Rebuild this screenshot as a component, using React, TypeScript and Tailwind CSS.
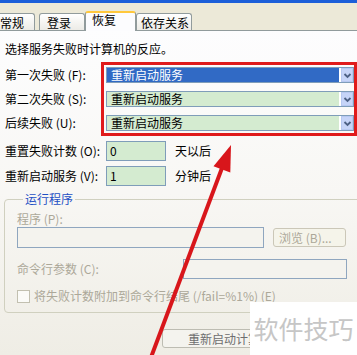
import React from 'react'

const font = "font-['Noto_Sans_CJK_SC','Noto_Sans',sans-serif]"

function Tab({ label, active, className }: { label: string; active?: boolean; className: string }) {
  if (active) {
    return (
      <div
        className={`relative z-10 -mb-px h-[20px] rounded-t-[3px] border border-b-0 border-[#919B9C] border-t-2 border-t-[#FFC83C] bg-[#FCFCFE] text-[12px] leading-[14px] ${className}`}
      >
        {label}
      </div>
    )
  }
  return (
    <div
      className={`h-[17px] rounded-t-[3px] border border-b-0 border-[#919B9C] bg-gradient-to-b from-white to-[#ECEBE6] pt-[2px] text-[12px] leading-[14px] ${className}`}
    >
      {label}
    </div>
  )
}

function Select({ selected }: { selected?: boolean }) {
  return (
    <div className="flex h-[16px] items-stretch border border-[#7F9DB9] bg-white">
      <div
        className={`flex flex-1 items-center pl-[4px] text-[12px] leading-[14px] ${
          selected ? 'bg-[#316AC5] text-white' : 'bg-[#D4EBD0] text-black'
        }`}
      >
        重新启动服务
      </div>
      <div className="ml-[2px] flex w-[12px] items-center justify-center border border-[#B7C8F1] bg-[#C6D4F8]">
        <svg width="9" height="7" viewBox="0 0 9 7">
          <path d="M1.5 2 L4.5 5 L7.5 2" fill="none" stroke="#4D6185" strokeWidth="1.8" />
        </svg>
      </div>
    </div>
  )
}

function Label({ children }: { children: React.ReactNode }) {
  return <div className="flex h-[16px] items-center text-[12px] leading-[14px] text-black">{children}</div>
}

export default function App() {
  return (
    <div className={`relative h-[355px] w-[357px] overflow-hidden bg-[#ECE9D8] ${font}`}>
      {/* window title strip */}
      <div className="h-[3px] bg-[#1C5FD9]" />

      {/* tabs */}
      <div className="flex h-[27px] items-end bg-[#ECE9D8]">
        <Tab label="常规" className="-ml-[9px] w-[44px] pl-[8px]" />
        <Tab label="登录" className="ml-[4px] w-[46px] pl-[7px]" />
        <Tab label="恢复" active className="w-[51px] pl-[6px]" />
        <Tab label="依存关系" className="w-[56px] pl-[4px]" />
      </div>

      {/* panel */}
      <div className="h-[325px] border-t border-[#919B9C] bg-gradient-to-b from-[#FDFDFE] via-[#F8F7F4] to-[#EFEDE5]">
        <div className="mt-[11px] pl-[5px] text-[12px] leading-[14px]">选择服务失败时计算机的反应。</div>

        <div className="mt-[6px] flex">
          <div className="flex w-[101px] flex-col gap-[8px] pl-[5px] pt-[5px]">
            <Label>第一次失败 (F):</Label>
            <Label>第二次失败 (S):</Label>
            <Label>后续失败 (U):</Label>
          </div>
          <div className="flex w-[256px] flex-col gap-[8px] border-[3px] border-[#E01B1B] pb-[2px] pl-[2px] pr-0 pt-[2px]">
            <Select selected />
            <Select />
            <Select />
          </div>
        </div>

        <div className="mt-[5px] flex flex-col gap-[5px]">
          <div className="flex items-center">
            <div className="w-[106px] pl-[5px] text-[12px] leading-[14px]">重置失败计数 (O):</div>
            <div className="flex h-[20px] w-[60px] items-center border border-[#7F9DB9] bg-[#D4EBD0] pl-[3px] text-[12px]">0</div>
            <div className="ml-[9px] text-[12px] leading-[14px]">天以后</div>
          </div>
          <div className="flex items-center">
            <div className="w-[106px] pl-[5px] text-[12px] leading-[14px]">重新启动服务 (V):</div>
            <div className="flex h-[20px] w-[60px] items-center border border-[#7F9DB9] bg-[#D4EBD0] pl-[3px] text-[12px]">1</div>
            <div className="ml-[9px] text-[12px] leading-[14px]">分钟后</div>
          </div>
        </div>

        <fieldset className="ml-[4px] mt-[6px] w-[362px] rounded-[4px] border border-[#D0D0BF] pb-[9px] pl-[12px]">
          <legend className="ml-[6px] px-[2px] text-[12px] leading-[14px] text-[#1E4FC4]">运行程序</legend>
          <div className="mt-[6px] text-[12px] leading-[14px] text-[#ACA899]">程序 (P):</div>
          <div className="mt-[1px] flex items-center">
            <div className="h-[21px] w-[247px] border border-[#8FA6BF] bg-[#F4F3EE]" />
            <div className="ml-[9px] flex h-[19px] w-[73px] items-center rounded-[3px] border border-[#CBC7B8] bg-[#F5F4EA] pl-[5px] text-[12px] leading-[14px] text-[#ACA899]">
              浏览 (B)...
            </div>
          </div>
          <div className="mt-[11px] flex h-[20px] items-center">
            <div className="w-[166px] text-[12px] leading-[14px] text-[#ACA899]">命令行参数 (C):</div>
            <div className="h-[20px] w-[164px] border border-[#8FA6BF] bg-[#F4F3EE]" />
          </div>
          <div className="mt-[10px] flex items-center">
            <div className="h-[13px] w-[13px] border border-[#C2C0B0] bg-[#FBFBF8]" />
            <div className="ml-[4px] text-[12px] leading-[14px] text-[#ACA899]">将失败计数附加到命令行结尾 (/fail=%1%) (E)</div>
          </div>
        </fieldset>

        {/* bottom button, its right part hidden behind the watermark */}
        <div className="ml-[162px] mt-[16px] h-[19px] w-[88px] overflow-hidden">
          <div className="flex h-[19px] w-[190px] items-center rounded-[3px] border border-[#BDBCB2] bg-[#F4F3EE] pl-[25px] text-[12px] leading-[14px] text-[#6E6E6E]">
            <span className="block w-[62px] overflow-hidden whitespace-nowrap">重新启动计算机选项 (R)...</span>
          </div>
        </div>
      </div>

      {/* watermark */}
      <div className="absolute left-[250px] top-[302px] flex h-[53px] w-[107px] items-center justify-center bg-white text-[25px] leading-none text-[#C6C6C6]">
        软件技巧
      </div>

      {/* red annotation arrow */}
      <svg className="pointer-events-none absolute left-0 top-0" width="357" height="355" viewBox="0 0 357 355">
        <line x1="150" y1="360" x2="222" y2="168" stroke="#D8161B" strokeWidth="4" />
        <polygon points="231,145 230.3,172.6 213.5,166.2" fill="#D8161B" />
      </svg>
    </div>
  )
}
